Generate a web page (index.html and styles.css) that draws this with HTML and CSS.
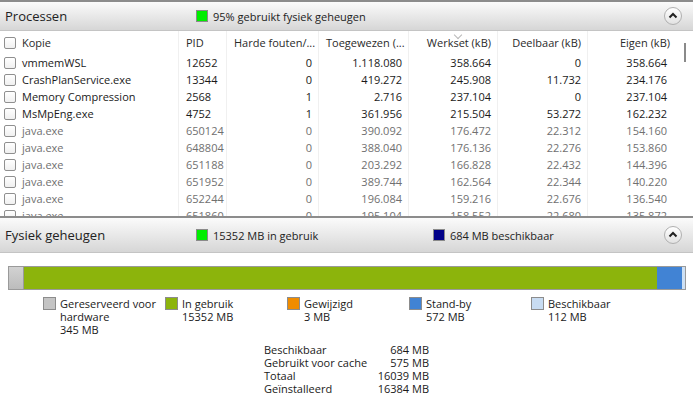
FILE: index.html
```html
<!DOCTYPE html>
<html lang="nl">
<head>
  <meta charset="UTF-8">
  <title>Geheugen - Broncontrole</title>
  <link rel="stylesheet" href="styles.css">
</head>
<body>
  <div class="section-head first">
    <span class="title">Processen</span>
    <span class="status"><i class="swatch green"></i>95% gebruikt fysiek geheugen</span>
    <span class="spacer"></span>
    <span class="collapse"><svg width="18" height="18" viewBox="0 0 18 18"><path d="M5.5 10.5 L9 7 L12.5 10.5" fill="none" stroke="#222" stroke-width="2"/></svg></span>
  </div>

  <div class="proc-wrap">
    <div class="proc-table">
      <div class="row head">
        <div class="cell name"><i class="check"></i>Kopie</div>
        <div class="cell">PID</div>
        <div class="cell">Harde fouten/...</div>
        <div class="cell">Toegewezen (...</div>
        <div class="cell num sorted">Werkset (kB)</div>
        <div class="cell num">Deelbaar (kB)</div>
        <div class="cell num">Eigen (kB)</div>
      </div>
      <div class="rows">
        <div class="row"><div class="cell name"><i class="check"></i>vmmemWSL</div><div class="cell">12652</div><div class="cell num">0</div><div class="cell num">1.118.080</div><div class="cell num">358.664</div><div class="cell num">0</div><div class="cell num">358.664</div></div>
        <div class="row"><div class="cell name"><i class="check"></i>CrashPlanService.exe</div><div class="cell">13344</div><div class="cell num">0</div><div class="cell num">419.272</div><div class="cell num">245.908</div><div class="cell num">11.732</div><div class="cell num">234.176</div></div>
        <div class="row"><div class="cell name"><i class="check"></i>Memory Compression</div><div class="cell">2568</div><div class="cell num">1</div><div class="cell num">2.716</div><div class="cell num">237.104</div><div class="cell num">0</div><div class="cell num">237.104</div></div>
        <div class="row"><div class="cell name"><i class="check"></i>MsMpEng.exe</div><div class="cell">4752</div><div class="cell num">1</div><div class="cell num">361.956</div><div class="cell num">215.504</div><div class="cell num">53.272</div><div class="cell num">162.232</div></div>
        <div class="row dim"><div class="cell name"><i class="check"></i>java.exe</div><div class="cell">650124</div><div class="cell num">0</div><div class="cell num">390.092</div><div class="cell num">176.472</div><div class="cell num">22.312</div><div class="cell num">154.160</div></div>
        <div class="row dim"><div class="cell name"><i class="check"></i>java.exe</div><div class="cell">648804</div><div class="cell num">0</div><div class="cell num">388.040</div><div class="cell num">176.136</div><div class="cell num">22.276</div><div class="cell num">153.860</div></div>
        <div class="row dim"><div class="cell name"><i class="check"></i>java.exe</div><div class="cell">651188</div><div class="cell num">0</div><div class="cell num">203.292</div><div class="cell num">166.828</div><div class="cell num">22.432</div><div class="cell num">144.396</div></div>
        <div class="row dim"><div class="cell name"><i class="check"></i>java.exe</div><div class="cell">651952</div><div class="cell num">0</div><div class="cell num">389.744</div><div class="cell num">162.564</div><div class="cell num">22.344</div><div class="cell num">140.220</div></div>
        <div class="row dim"><div class="cell name"><i class="check"></i>java.exe</div><div class="cell">652244</div><div class="cell num">0</div><div class="cell num">196.084</div><div class="cell num">159.216</div><div class="cell num">22.676</div><div class="cell num">136.540</div></div>
        <div class="row dim"><div class="cell name"><i class="check"></i>java.exe</div><div class="cell">651860</div><div class="cell num">0</div><div class="cell num">195.104</div><div class="cell num">158.552</div><div class="cell num">22.680</div><div class="cell num">135.872</div></div>
      </div>
    </div>
    <div class="scrollbar"><i class="thumb"></i></div>
  </div>

  <div class="section-head second">
    <span class="title">Fysiek geheugen</span>
    <span class="status wide"><i class="swatch green"></i>15352 MB in gebruik</span>
    <span class="status"><i class="swatch navy"></i>684 MB beschikbaar</span>
    <span class="spacer"></span>
    <span class="collapse"><svg width="18" height="18" viewBox="0 0 18 18"><path d="M5.5 10.5 L9 7 L12.5 10.5" fill="none" stroke="#222" stroke-width="2"/></svg></span>
  </div>

  <div class="memory">
    <div class="bar">
      <div class="seg reserved" style="width: 14px"></div>
      <div class="seg used" style="width: 634px"></div>
      <div class="seg modified" style="width: 0px"></div>
      <div class="seg standby" style="width: 25px"></div>
      <div class="seg free" style="width: 3px"></div>
    </div>

    <div class="legend">
      <div class="item"><i class="box reserved"></i><span>Gereserveerd voor<br>hardware<br>345 MB</span></div>
      <div class="item"><i class="box used"></i><span>In gebruik<br>15352 MB</span></div>
      <div class="item"><i class="box modified"></i><span>Gewijzigd<br>3 MB</span></div>
      <div class="item"><i class="box standby"></i><span>Stand-by<br>572 MB</span></div>
      <div class="item"><i class="box free"></i><span>Beschikbaar<br>112 MB</span></div>
    </div>

    <div class="stats">
      <span>Beschikbaar</span><span class="val">684 MB</span>
      <span>Gebruikt voor cache</span><span class="val">575 MB</span>
      <span>Totaal</span><span class="val">16039 MB</span>
      <span>Geïnstalleerd</span><span class="val">16384 MB</span>
    </div>
  </div>
</body>
</html>
```

FILE: styles.css
```css
body {
  margin: 0;
  background: #ffffff;
  font-family: 'Open Sans', 'Noto Sans', sans-serif;
  font-size: 11px;
  color: #1a1a1a;
  overflow: hidden;
}

.section-head {
  display: flex;
  align-items: center;
  height: 28px;
  background: linear-gradient(to bottom, #fbfbfb, #d6d6d6);
  border-bottom: 1px solid #c4c4c4;
}

.section-head.first {
  border-top: 2px solid #8c8c8c;
}

.section-head.second {
  height: 34px;
  border-top: 2px solid #8c8c8c;
}

.section-head .title {
  width: 191px;
  padding-left: 5px;
  font-size: 13px;
  color: #222;
}

.status {
  display: flex;
  align-items: center;
  color: #222;
}

.status.wide {
  width: 237px;
}

.swatch {
  width: 10px;
  height: 10px;
  margin-right: 5px;
  border: 1px solid #8a8a8a;
}

.swatch.green { background: #00ee00; }
.swatch.navy { background: #000088; }

.spacer {
  flex: 1;
}

.collapse {
  width: 18px;
  height: 18px;
  margin-right: 11px;
  border-radius: 50%;
  border: 1px solid #b0b0b0;
  background: linear-gradient(to bottom, #ffffff, #e2e2e2);
  box-sizing: border-box;
  display: flex;
  align-items: center;
  justify-content: center;
}

.collapse svg {
  display: block;
  margin: -1px;
}

/* process list */

.proc-wrap {
  display: flex;
  height: 185px;
  overflow: hidden;
}

.proc-table {
  width: 673px;
}

.row {
  display: grid;
  grid-template-columns: 178px 48px 92px 90px 89px 90px 86px;
  height: 17px;
  align-items: center;
}

.row.head {
  height: 23px;
  color: #2a2a2a;
}

.row.head .cell {
  height: 23px;
  line-height: 23px;
  position: relative;
}

.cell {
  height: 17px;
  line-height: 17px;
  padding-left: 7px;
  padding-right: 6px;
  border-left: 1px solid #f0f0f0;
  white-space: nowrap;
  overflow: hidden;
}

.cell.name {
  border-left: none;
  padding-left: 4px;
  display: flex;
  align-items: center;
}

.cell.num {
  text-align: right;
}

.row.head .cell.sorted::before {
  content: "";
  position: absolute;
  left: 46px;
  top: 1px;
  width: 5px;
  height: 5px;
  border-right: 1px solid #b8b8b8;
  border-bottom: 1px solid #b8b8b8;
  transform: rotate(45deg);
  transform-origin: center;
}

.row.head .cell:last-child {
  padding-right: 3px;
}

.row.dim {
  color: #707070;
}

.check {
  width: 10px;
  height: 10px;
  border: 1px solid #8f8f8f;
  border-radius: 2px;
  background: linear-gradient(to bottom, #ffffff, #f0f0f0);
  margin-right: 6px;
  flex-shrink: 0;
}

.scrollbar {
  width: 20px;
  position: relative;
}

.thumb {
  position: absolute;
  left: 11px;
  top: 12px;
  width: 2px;
  height: 19px;
  background: #8a8a8a;
}

/* physical memory */

.memory {
  padding: 13px 9px 0 8px;
}

.bar {
  display: flex;
  height: 22px;
  border: 1px solid #9a9a9a;
  width: 676px;
  box-sizing: content-box;
}

.seg {
  height: 22px;
}

.seg.reserved { background: linear-gradient(to bottom, #d2d2d2, #bcbcbc); border-right: 1px solid #9a9a9a; }
.seg.used { background: #8cb40c; }
.seg.modified { background: #f08c00; }
.seg.standby { background: #4183d4; }
.seg.free { background: #cde0f4; }

.legend {
  display: grid;
  grid-template-columns: repeat(5, 122px);
  padding-left: 35px;
  margin-top: 7px;
  line-height: 13px;
}

.item {
  display: flex;
  align-items: flex-start;
}

.box {
  width: 13px;
  height: 13px;
  border: 1px solid #8c8c8c;
  box-sizing: border-box;
  margin-right: 4px;
  flex-shrink: 0;
}

.box.reserved { background: #c4c4c4; }
.box.used { background: #8cb40c; }
.box.modified { background: #f08c00; }
.box.standby { background: #4183d4; }
.box.free { background: #c8dcf2; }

.stats {
  display: grid;
  grid-template-columns: 110px 55px;
  margin: 7px 0 0 256px;
  line-height: 13px;
}

.stats .val {
  text-align: right;
}
```
